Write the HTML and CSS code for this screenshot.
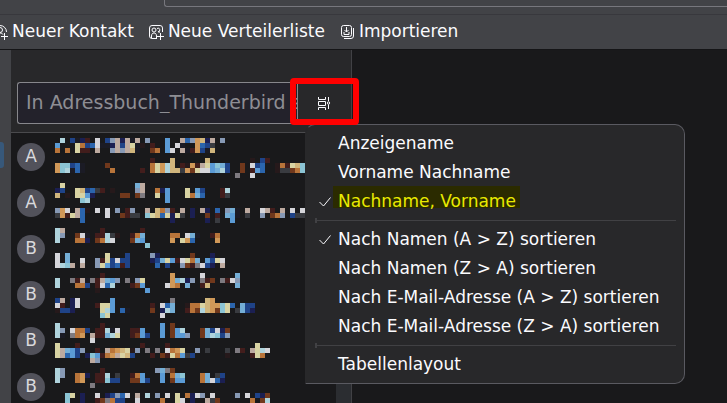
FILE: index.html
```html
<!DOCTYPE html>
<html lang="de">
<head>
    <meta charset="UTF-8">
    <meta name="viewport" content="width=device-width, initial-scale=1.0">
    <title>Adressbuch</title>
    <link rel="stylesheet" href="styles.css">
</head>
<body>
    <header class="titlebar">
        <div class="global-search"></div>
    </header>

    <nav class="toolbar">
        <button class="tool" type="button">
            <svg width="16" height="16" viewBox="0 0 16 16">
                <path d="M14.5 8A6.5 6.5 0 1 0 8 14.5M4 13c0-3 1.5-4 4-4 1.5 0 2.5.5 3 1.5"/>
                <circle cx="8" cy="6" r="2.5"/>
                <path d="M12.5 9v7M9 12.5h7"/>
            </svg>
            Neuer Kontakt
        </button>
        <button class="tool" type="button">
            <svg width="16" height="16" viewBox="0 0 16 16">
                <path d="M14.5 8V4a2.5 2.5 0 0 0-2.5-2.5H4A2.5 2.5 0 0 0 1.500 4v8A2.5 2.5 0 0 0 4 14.5h5"/>
                <circle cx="6" cy="6" r="2"/>
                <path d="M3.5 14v-2c0-2 1-3 2.5-3s2.5 1 2.500 3v2M9 4.5a1.800 1.800 0 1 1 1 3.300c1 0 1.500.2 2 .7"/>
                <path d="M12.5 9v7M9 12.5h7"/>
            </svg>
            Neue Verteilerliste
        </button>
        <button class="tool" type="button">
            <svg width="16" height="16" viewBox="0 0 16 16">
                <rect x="2.5" y="1.5" width="10" height="11" rx="2"/>
                <path d="M14.5 4v8a2.5 2.5 0 0 1-2.5 2.5H5M7.5 3v5M5.500 6l2 2 2-2M5 8v2.500h5V8"/>
            </svg>
            Importieren
        </button>
    </nav>

    <main class="book">
        <aside class="folders">
            <div class="folder-selected"></div>
        </aside>

        <section class="pane">
            <div class="search-row">
                <input class="search" type="text" aria-label="Suchen" placeholder="In Adressbuch_Thunderbird suchen">
                <div class="display">
                    <button class="display-button" type="button" aria-label="Anzeigeoptionen">
                        <svg width="14" height="14" viewBox="0 0 14 14">
                            <path d="M1.5 1v2.5h7V1M1.5 5.5h7v4h-7zM1.5 14v-2.500h7V14M11.500 1v4M11.5 8.5V13"/>
                            <circle cx="11.5" cy="7" r="1.200"/>
                        </svg>
                    </button>
                    <div class="marker"></div>

                    <div class="menu" role="menu">
                        <button class="item" type="button">Anzeigename</button>
                        <button class="item" type="button">Vorname Nachname</button>
                        <button class="item checked" type="button">
                            <svg class="check" width="12" height="10" viewBox="0 0 12 10"><path d="M.5 5l4 4 7-8.5"/></svg>
                            <mark>Nachname, Vorname</mark>
                        </button>
                        <hr>
                        <button class="item checked" type="button">
                            <svg class="check" width="12" height="10" viewBox="0 0 12 10"><path d="M.5 5l4 4 7-8.5"/></svg>
                            Nach Namen (A &gt; Z) sortieren
                        </button>
                        <button class="item" type="button">Nach Namen (Z &gt; A) sortieren</button>
                        <button class="item" type="button">Nach E-Mail-Adresse (A &gt; Z) sortieren</button>
                        <button class="item" type="button">Nach E-Mail-Adresse (Z &gt; A) sortieren</button>
                        <hr>
                        <button class="item" type="button">Tabellenlayout</button>
                    </div>
                </div>
            </div>

            <div class="contacts">
                <div class="avatars">
                    <span class="avatar">A</span>
                    <span class="avatar">A</span>
                    <span class="avatar">B</span>
                    <span class="avatar">B</span>
                    <span class="avatar">B</span>
                    <span class="avatar">B</span>
                </div>
                <svg id="names" width="250" height="265" viewBox="0 0 250 265"></svg>
                <div class="scrollbar"></div>
            </div>
        </section>
    </main>

    <script src="names.js"></script>
</body>
</html>
```
FILE: styles.css
```css
* {
    box-sizing: border-box;
}

body {
    margin: 0;
    height: 100vh;
    display: flex;
    flex-direction: column;
    overflow: hidden;
    background: #19191b;
    color: #fbfbfe;
    font-family: "DejaVu Sans", sans-serif;
    font-size: 17px;
}

button {
    border: none;
    background: none;
    color: inherit;
    font: inherit;
    white-space: nowrap;
}

svg {
    flex: none;
    fill: none;
    stroke: #fbfbfe;
}

/* top bars */
.titlebar {
    flex: none;
    height: 15px;
    padding-left: 164px;
    background: #424347;
    border-bottom: 1px solid #38383d;
}

.global-search {
    height: 7px;
    border: 1px solid #77777d;
    border-width: 0 0 1px 1px;
    border-bottom-left-radius: 3px;
}

.toolbar {
    flex: none;
    display: flex;
    align-items: center;
    gap: 14px;
    height: 35px;
    margin-left: -8px;
    background: #424347;
    border-bottom: 1px solid #151517;
}

.tool {
    display: flex;
    align-items: center;
    gap: 4px;
    padding: 0 0 2px;
}

.tool svg {
    margin-top: 2px;
}

/* address book */
.book {
    flex: 1;
    min-height: 0;
    display: flex;
}

.folders {
    flex: none;
    width: 11px;
    padding-top: 92px;
    background: #424347;
}

.folder-selected {
    width: 4px;
    height: 26px;
    border-radius: 0 3px 3px 0;
    background: #37587a;
}

.pane {
    flex: none;
    width: 341px;
    display: flex;
    flex-direction: column;
    border-right: 1px solid #414145;
}

.search-row {
    display: flex;
    padding: 32px 0 8px 6px;
    background: #28282a;
    border-bottom: 1px solid #4a4a4d;
}

.search {
    flex: 1;
    min-width: 0;
    height: 42px;
    padding: 0 0 2px 8px;
    border: 1px solid #87878c;
    border-right: none;
    border-radius: 3px 0 0 3px;
    background: #23222b;
    color: #fbfbfe;
    font: inherit;
    font-size: 19px;
}

.search::placeholder {
    color: #8e8e94;
    opacity: 1;
}

.display {
    position: relative;
    width: 54px;
}

.display-button {
    display: flex;
    align-items: center;
    width: 100%;
    height: 42px;
    padding: 0 19px;
    border-left: 1px solid #87878c;
}

/* red frame around the button */
.marker {
    position: absolute;
    top: -4px;
    left: -7px;
    z-index: 2;
    width: 69px;
    height: 47px;
    border: 6px solid #ff0000;
    border-radius: 4px;
    pointer-events: none;
}

/* popup menu */
.menu {
    position: absolute;
    top: 42px;
    left: 8px;
    z-index: 1;
    width: 380px;
    padding: 4px 0;
    border: 1px solid #5a5a61;
    border-left-color: #28282a;
    border-radius: 10px 10px 10px 0;
    background: #28282a;
}

.item {
    display: flex;
    align-items: center;
    width: 100%;
    height: 29px;
    padding: 0 0 2px 32px;
    text-align: left;
}

.checked {
    gap: 7px;
    padding-left: 13px;
}

.check {
    margin-top: 3px;
}

.menu hr {
    height: 5px;
    margin: 2px 8px 2px 9px;
    border: none;
    background:
        linear-gradient(#414144, #414144) 0 0 / 2px 5px no-repeat,
        linear-gradient(#414144, #414144) 0 2px / 100% 1px no-repeat;
}

.item mark {
    margin-left: -5px;
    padding: 5px 4px 0 5px;
    margin-top: -5px;
    background: linear-gradient(#2b2b00, #2b2b00) 0 0 / 100% 22px no-repeat;
    color: #e9ea00;
}

/* contact list */
.contacts {
    flex: 1;
    min-height: 0;
    display: flex;
    align-items: flex-start;
    gap: 10px;
    padding-left: 6px;
}

.avatars {
    display: flex;
    flex-direction: column;
    gap: 18px;
    padding-top: 10px;
}

.avatar {
    width: 28px;
    height: 28px;
    border-radius: 50%;
    background: #52525b;
    color: #d9d9dc;
    line-height: 27px;
    text-align: center;
}

#names {
    margin-top: 5px;
    stroke: none;
    shape-rendering: crispEdges;
}

.scrollbar {
    width: 15px;
    height: 100%;
    margin-left: auto;
    background: linear-gradient(transparent 240px, #2b2d31 240px);
}
```
FILE: names.js
```js
// obscured names, one letter per 5px cell
const colors = {
    a: '#afd3dc', b: '#5b9bd5', c: '#8bc4d4', d: '#2b65ad', e: '#1b1f52',
    f: '#1b1b25', g: '#b8743a', h: '#d09858', i: '#d8d3a3', j: '#d5d5da',
    k: '#421d1c', l: '#70381c', m: '#8799b5', n: '#bdaaa0', o: '#7e7a80',
    p: '#d0b57c', q: '#26191b', r: '#393b40', s: '#74aed6', t: '#1f4388'
};

const rows = [
    '.a.tfek.j.tmnenfn.m...b..ndmhpen.m',
    'b...igtdjffentnifq.k..b.jf..hdtr',
    'g.g.ikk.n..mnmnpf..lg.bj.nfkhtfp',
    '',
    '...................k...p......p........q.tk',
    'hcctdf....l........gihap.kqhknibcst..l.jtd..qgkipc',
    'hcafdf.....g.....k.gihapprhlijjbsat..l.kbd..qrrlgc',
    '....................................o..j',
    '',
    '.i..............sn',
    'et..iptdrk.q....mn..geb...i.bt...ka',
    'p.q.iibe.....ll.lo..i.b...igsd...kr',
    '.....ca...............b',
    '',
    'mhj.ndq.j.j.m.km..n.pgmk.n.e.ne.d.msf.n..jnk.n.j.j',
    'rhkind....j..lkrr.cipdieir.e..l.k.sbf.r..m.lgm.trr',
    '.....d.................e......e.r..b',
    '',
    'an.......k.......k',
    'am..ljf.kkarq..kgs.....gg.jsf..kg',
    'a...gge.lgaj...lsb.....h.ihd....h',
    '..................c',
    '',
    'j.s.......i...t....me......l...e',
    'j.s..j..mkitjtt....etsibkjigs.btij',
    'jacn.n..mibtdkt.....d.t..mlkojte.n',
    '',
    '.........k.............h.....j......s',
    'a..oknfoknsbm.o.mi.....hsaem.okl.okjm',
    'a...ggt.kjda...klb....jhg.s..kp.....s',
    '........q.........b',
    '',
    'tn.ej......b...........o......ph',
    'jk.ej...kiib.......k.jds..qggiphhcid.stt',
    'qtte.....iab.df....l.eas..kglaphlci.rste',
    '.........ci..........j',
    '',
    'a........k...........b.l',
    'am.jggt.kkafj..kkb...b.lba...lstjel',
    'af.ogh.nkksai..klbt..b.lbbm..lsactm',
    '.......j',
    'i...k............k....k.................i',
    'insbtm..k.nghpiqm.o.o.jghi..m.r...r.ok.niaj',
    'indbt.ecbkghnipt...k.lkigbrt......q....kig',
    '.......nm',
    '',
    'am.......k..........msol',
    'am..ghe.kka.r..kgb...b.gsc...gs.rt',
    'a...gh..kkctt..llbt..b.lbb...gsjde',
    '.......o',
    '',
    '..ci.e..j.etmdj.n.a.m.j.i.gejm.j....m.j.tel',
    '..c..e..klogtt..j....g..ij.e..nrl......g.la'
];

const names = document.getElementById('names');

rows.forEach((row, y) => {
    [...row].forEach((letter, x) => {
        if (letter === '.') return;
        const cell = document.createElementNS('http://www.w3.org/2000/svg', 'rect');
        cell.setAttribute('x', x * 5);
        cell.setAttribute('y', y * 5);
        cell.setAttribute('width', 5);
        cell.setAttribute('height', 5);
        cell.setAttribute('fill', colors[letter]);
        names.appendChild(cell);
    });
});
```
